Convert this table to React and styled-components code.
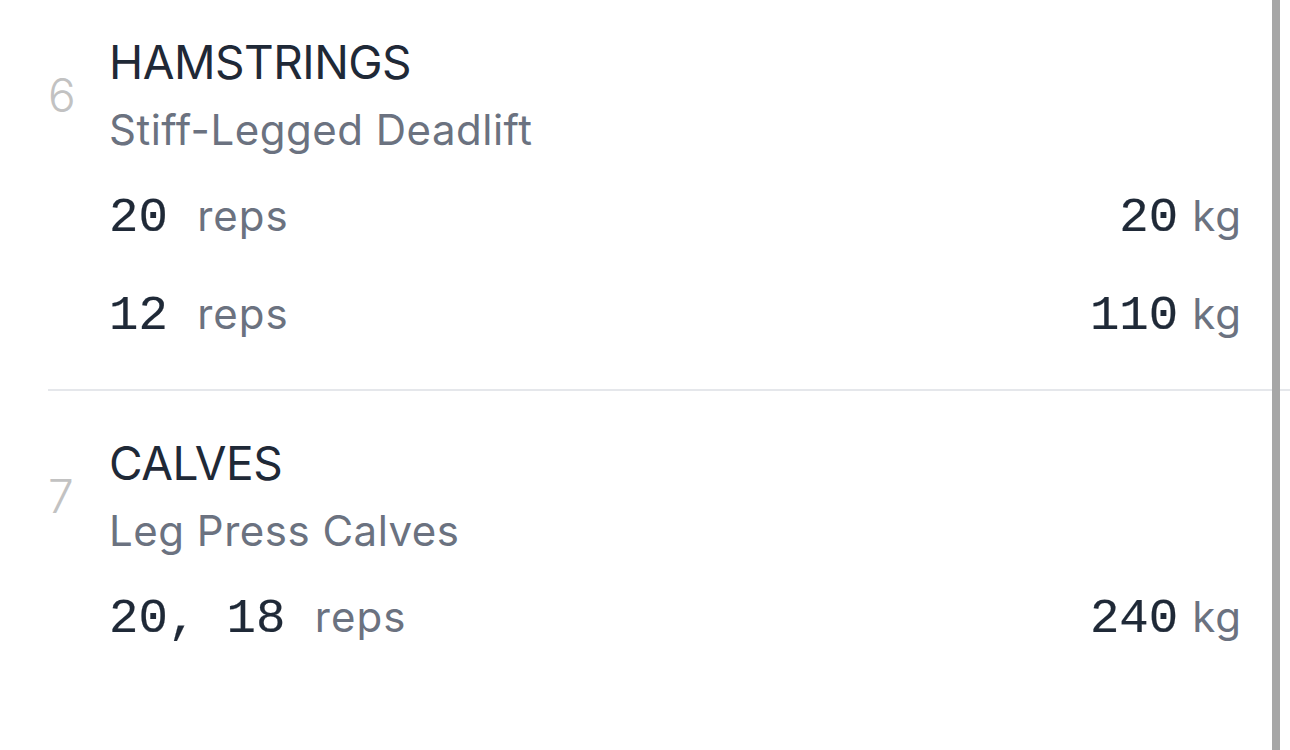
import React from 'react';
import styled, { createGlobalStyle } from 'styled-components';

const GlobalStyle = createGlobalStyle`
  html, body {
    margin: 0;
    padding: 0;
    background: #ffffff;
  }
  body {
    font-family: Inter, "Noto Sans", sans-serif;
    overflow: hidden;
  }
`;

const Viewport = styled.div`
  position: relative;
  height: 750px;
  overflow: hidden;
`;

const List = styled.div`
  margin-top: -10px;
`;

const Section = styled.section`
  display: grid;
  grid-template-columns: 61px 1fr;
  margin-left: 48px;
  padding: 44px 48px 25px 0;
  border-bottom: 2px solid #e5e7eb;
  &:last-child {
    border-bottom: none;
  }
`;

const Index = styled.div`
  grid-column: 1;
  grid-row: 1;
  align-self: center;
  font-size: 46px;
  font-weight: 300;
  color: #c2c2c2;
  line-height: 1;
`;

const Header = styled.div`
  grid-column: 2;
  grid-row: 1;
  display: flex;
  flex-direction: column;
  gap: 15px;
`;

const Muscle = styled.div`
  font-size: 46px;
  line-height: 56px;
  color: #1f2937;
  letter-spacing: -0.5px;
`;

const Exercise = styled.div`
  font-size: 42px;
  line-height: 50px;
  color: #6b7280;
  letter-spacing: 0.5px;
`;

const Sets = styled.div`
  grid-column: 2;
  grid-row: 2;
  display: flex;
  flex-direction: column;
  margin-top: 13px;
`;

const SetRow = styled.div`
  display: flex;
  justify-content: space-between;
  align-items: baseline;
  line-height: 96px;
`;

const Group = styled.div`
  display: flex;
  align-items: baseline;
  gap: ${p => p.$gap}px;
`;

const Value = styled.span`
  font-family: "Liberation Mono", "DejaVu Sans Mono", monospace;
  font-size: 49px;
  color: #1f2937;
  white-space: pre;
  -webkit-text-stroke: 0.2px #1f2937;
`;

const Unit = styled.span`
  font-size: 42px;
  color: #6b7280;
  letter-spacing: 1px;
`;

const Scrollbar = styled.div`
  position: absolute;
  top: 0;
  bottom: 0;
  left: 1272px;
  width: 8px;
  background: #a6a6a6;
`;

const exercises = [
  {
    n: 6,
    muscle: 'HAMSTRINGS',
    name: 'Stiff-Legged Deadlift',
    sets: [
      { reps: '20', kg: '20' },
      { reps: '12', kg: '110' },
    ],
  },
  {
    n: 7,
    muscle: 'CALVES',
    name: 'Leg Press Calves',
    sets: [{ reps: '20, 18', kg: '240' }],
  },
];

export default function App() {
  return (
    <Viewport>
      <GlobalStyle />
      <List>
        {exercises.map(ex => (
          <Section key={ex.n}>
            <Index>{ex.n}</Index>
            <Header>
              <Muscle>{ex.muscle}</Muscle>
              <Exercise>{ex.name}</Exercise>
            </Header>
            <Sets>
              {ex.sets.map((s, i) => (
                <SetRow key={i}>
                  <Group $gap={0}>
                    <Value>{s.reps + ' '}</Value>
                    <Unit>reps</Unit>
                  </Group>
                  <Group $gap={14}>
                    <Value>{s.kg}</Value>
                    <Unit>kg</Unit>
                  </Group>
                </SetRow>
              ))}
            </Sets>
          </Section>
        ))}
      </List>
      <Scrollbar />
    </Viewport>
  );
}
